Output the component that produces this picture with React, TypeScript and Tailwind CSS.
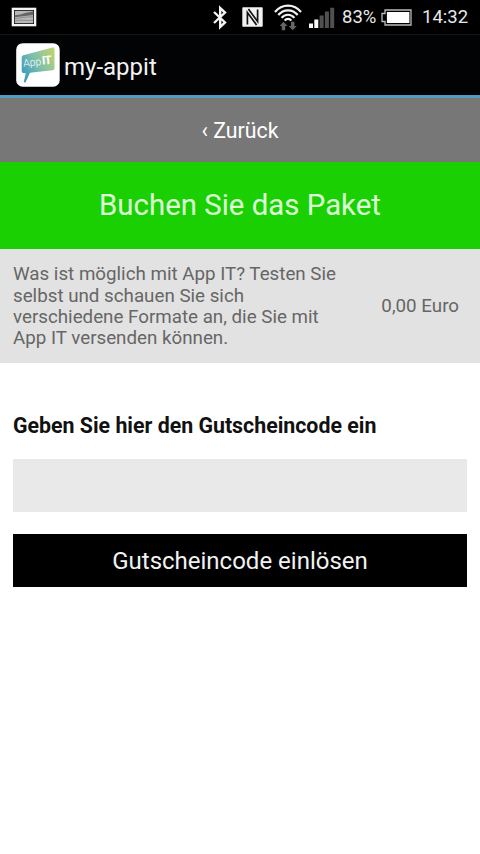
import { useState } from "react";

function PictureIcon() {
  return (
    <svg className="h-[20px] w-[26px] shrink-0" viewBox="0 0 26 20">
      <rect width="24.6" height="18.6" x="0.7" y="0.7" fill="#f4f4f4" />
      <rect width="20" height="14" x="3" y="3" fill="#111" />
      <rect width="18.4" height="12.4" x="3.8" y="3.8" fill="#b8b8b8" />
      <path d="M3.8 8.2 9 7.4l6-1.6 7.2-1.4V8l-6 .8-6.2.6-6.2.8z" fill="#666" />
      <path d="M3.8 11.5c6-.4 12-2 18.4-1.7M3.8 14c5-2 13 .5 18.4-1" fill="none" stroke="#808080" strokeWidth="0.8" />
    </svg>
  );
}

function BluetoothIcon() {
  return (
    <svg className="h-[25px] w-[14px] shrink-0" viewBox="0 0 14 25">
      <path d="m1 7 11 10.500L7.200 22V3L12 7.500 1 18" fill="none" stroke="#f2f2f2" strokeWidth="2.400" />
    </svg>
  );
}

function NfcIcon() {
  return (
    <svg className="h-[20px] w-[21px] shrink-0" viewBox="0 0 21 20">
      <rect width="20.4" height="19.4" x="0.3" y="0.3" fill="#f2f2f2" rx="0.8" />
      <path d="M5.400 17.500V5.500L14.600 18M15.600 2.500v12L6.400 2" fill="none" stroke="#111" strokeWidth="1.700" />
    </svg>
  );
}

function WifiIcon() {
  return (
    <svg className="h-[28px] w-[28px] shrink-0" viewBox="0 0 28 28">
      <g fill="none" stroke="#f2f2f2" strokeWidth="2.200">
        <path d="M1 9C8 .5 20 .5 27 9" />
        <path d="M4.300 12C9.500 5.700 18.500 5.700 23.700 12" />
        <path d="M7.600 14.900C11 10.700 17 10.700 20.400 14.900" />
        <path d="M10.700 17.600C12.500 15.400 15.500 15.400 17.300 17.600" />
      </g>
      <path d="m9.500 18.800 4 4.200h-2.300v4.300H7.800V23H5.500zM18.700 27.300l-4-4.200H17v-4.300h3.400v4.300h2.300z" fill="#666" />
    </svg>
  );
}

function SignalIcon() {
  return (
    <svg className="h-[21px] w-[26px] shrink-0" viewBox="0 0 26 21">
      <path d="M0 16.500h4V21H0zM5.300 12.500h4V21h-4z" fill="#fafafa" />
      <path d="M10.600 8.500h4V21h-4zM15.900 4.500h4V21h-4zM21.200.7h4V21h-4z" fill="#505050" />
    </svg>
  );
}

function BatteryIcon() {
  return (
    <svg className="h-[17px] w-[31px] shrink-0" viewBox="0 0 31 17">
      <path d="M4 1h26v15H4v-3.500H1v-8h3z" fill="none" stroke="#bbb" strokeWidth="1.300" />
      <rect width="22.5" height="11" x="5.9" y="3" fill="#fff" />
    </svg>
  );
}

function AppLogo() {
  return (
    <svg className="h-[44px] w-[44px] shrink-0" viewBox="0 0 44 44">
      <defs>
        <linearGradient id="bubble" x1="0" x2="1" y1="0.8" y2="0.1">
          <stop offset="0" stopColor="#3299c0" />
          <stop offset="0.5" stopColor="#7fc0ab" />
          <stop offset="1" stopColor="#c0d36f" />
        </linearGradient>
      </defs>
      <rect width="43.5" height="43.5" x="0.2" y="0.2" fill="#fff" rx="6.5" />
      <path d="M7.300 12.300 36.500 4.400q2-.5 2 1.600V25.500q0 1.600-2 1.800L14 29.800 9.300 39.800 7.800 39 9.800 30.200 7.500 30.100q-1.800-.1-1.800-2V14.300q0-1.600 1.600-2z" fill="url(#bubble)" />
      <g fill="#fff" fontFamily="Roboto, sans-serif" transform="rotate(-5 7 23)">
        <text x="7.5" y="23.7" fontSize="10.5" fontWeight="300" textLength="18">App</text>
        <text x="26.2" y="23.3" fontSize="12" fontWeight="700" textLength="10">IT</text>
      </g>
    </svg>
  );
}

function StatusBar() {
  return (
    <div className="flex h-[34px] items-center bg-black pr-[10px] pl-[11px] text-[18.5px] text-[#e8e8e8]">
      <PictureIcon />
      <div className="ml-auto flex h-full items-center">
        <BluetoothIcon />
        <div className="ml-[15px] flex"><NfcIcon /></div>
        <div className="ml-[11px] flex"><WifiIcon /></div>
        <div className="ml-[7px] flex"><SignalIcon /></div>
        <span className="ml-[7px] w-[35px] pt-[2px] whitespace-nowrap">83%</span>
        <div className="ml-[4px] flex"><BatteryIcon /></div>
        <span className="ml-[10px] w-[48px] pt-[2px] whitespace-nowrap">14:32</span>
      </div>
    </div>
  );
}

export default function App() {
  const [code, setCode] = useState("");

  return (
    <div className="min-h-screen w-[480px] bg-white font-['Roboto',sans-serif]">
      <StatusBar />
      <header className="flex h-[64px] items-center border-t border-b-[3px] border-t-[#151515] border-b-[#4f9dbf] bg-[#020304] pl-[16px]">
        <AppLogo />
        <h1 className="ml-[4px] pt-[3px] text-[24px] leading-none text-[#f3f3f3]">my-appit</h1>
      </header>

      <button className="flex h-[64px] w-full items-center justify-center bg-[#777] pt-px text-[21.3px] text-white">
        ‹ Zurück
      </button>
      <h2 className="flex h-[87px] items-center justify-center bg-[#1bd002] text-[29.4px] text-[#dcffd8]">
        Buchen Sie das Paket
      </h2>

      <section className="flex h-[114px] items-center justify-between bg-[#e2e2e2] pt-[2px] pr-[21px] pl-[13px] text-[18.76px] leading-[21.33px] text-[#666]">
        <p className="w-[335px]">
          Was ist möglich mit App IT? Testen Sie selbst und schauen Sie sich verschiedene Formate an, die Sie mit App IT versenden können.
        </p>
        <span className="whitespace-nowrap">0,00 Euro</span>
      </section>

      <form className="px-[13px] pt-[50px]" onSubmit={(e) => e.preventDefault()}>
        <label htmlFor="code" className="block text-[21.33px] leading-[26px] font-bold whitespace-nowrap text-[#111]">
          Geben Sie hier den Gutscheincode ein
        </label>
        <input
          id="code"
          value={code}
          onChange={(e) => setCode(e.target.value)}
          className="mt-[20px] block h-[53px] w-full bg-[#e9e9e9] px-3 text-xl outline-none"
        />
        <button className="mt-[22px] flex h-[53px] w-full items-center justify-center bg-black text-[24px] text-[#f2f2f2]">
          Gutscheincode einlösen
        </button>
      </form>
    </div>
  );
}
